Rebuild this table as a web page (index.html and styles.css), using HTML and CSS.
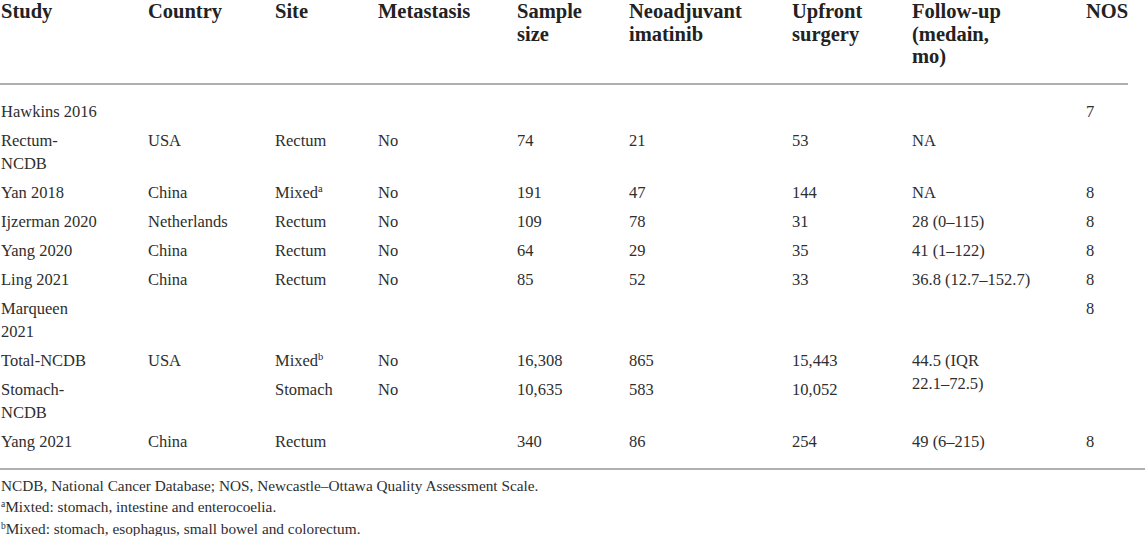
FILE: index.html
```html
<!DOCTYPE html>
<html lang="en">
<head>
<meta charset="utf-8">
<title>Studies</title>
<link rel="stylesheet" href="styles.css">
</head>
<body>
<table class="tbl">
  <colgroup>
    <col class="c1"><col class="c2"><col class="c3"><col class="c4"><col class="c5"><col class="c6"><col class="c7"><col class="c8"><col class="c9">
  </colgroup>
  <thead>
    <tr>
      <th>Study</th>
      <th>Country</th>
      <th>Site</th>
      <th>Metastasis</th>
      <th>Sample<br>size</th>
      <th>Neoadjuvant<br>imatinib</th>
      <th>Upfront<br>surgery</th>
      <th>Follow-up<br>(medain,<br>mo)</th>
      <th>NOS</th>
    </tr>
  </thead>
  <tbody>
    <tr class="first">
      <td>Hawkins 2016</td><td></td><td></td><td></td><td></td><td></td><td></td><td></td><td>7</td>
    </tr>
    <tr>
      <td>Rectum-<br>NCDB</td><td>USA</td><td>Rectum</td><td>No</td><td>74</td><td>21</td><td>53</td><td>NA</td><td></td>
    </tr>
    <tr>
      <td>Yan 2018</td><td>China</td><td>Mixed<sup>a</sup></td><td>No</td><td>191</td><td>47</td><td>144</td><td>NA</td><td>8</td>
    </tr>
    <tr>
      <td>Ijzerman 2020</td><td>Netherlands</td><td>Rectum</td><td>No</td><td>109</td><td>78</td><td>31</td><td>28 (0–115)</td><td>8</td>
    </tr>
    <tr>
      <td>Yang 2020</td><td>China</td><td>Rectum</td><td>No</td><td>64</td><td>29</td><td>35</td><td>41 (1–122)</td><td>8</td>
    </tr>
    <tr>
      <td>Ling 2021</td><td>China</td><td>Rectum</td><td>No</td><td>85</td><td>52</td><td>33</td><td>36.8 (12.7–152.7)</td><td>8</td>
    </tr>
    <tr>
      <td>Marqueen<br>2021</td><td></td><td></td><td></td><td></td><td></td><td></td><td></td><td>8</td>
    </tr>
    <tr>
      <td>Total-NCDB</td><td>USA</td><td>Mixed<sup>b</sup></td><td>No</td><td>16,308</td><td>865</td><td>15,443</td><td rowspan="2">44.5 (IQR<br>22.1–72.5)</td><td></td>
    </tr>
    <tr>
      <td>Stomach-<br>NCDB</td><td></td><td>Stomach</td><td>No</td><td>10,635</td><td>583</td><td>10,052</td><td></td>
    </tr>
    <tr class="last">
      <td>Yang 2021</td><td>China</td><td>Rectum</td><td></td><td>340</td><td>86</td><td>254</td><td>49 (6–215)</td><td>8</td>
    </tr>
  </tbody>
</table>
<div class="notes">
  <p>NCDB, National Cancer Database; NOS, Newcastle–Ottawa Quality Assessment Scale.</p>
  <p><sup>a</sup>Mixted: stomach, intestine and enterocoelia.</p>
  <p><sup>b</sup>Mixed: stomach, esophagus, small bowel and colorectum.</p>
</div>
</body>
</html>
```

FILE: styles.css
```css
html, body {
  margin: 0;
  padding: 0;
  background: #ffffff;
}

body {
  font-family: "Liberation Serif", "Times New Roman", serif;
  color: #2e2e2e;
}

.tbl {
  width: 1128px;
  border-collapse: collapse;
  table-layout: fixed;
}

.c1 { width: 147px; }
.c2 { width: 127px; }
.c3 { width: 103px; }
.c4 { width: 139px; }
.c5 { width: 112px; }
.c6 { width: 163px; }
.c7 { width: 120px; }
.c8 { width: 174px; }
.c9 { width: 43px; }

.tbl th {
  font-size: 20.5px;
  font-weight: bold;
  line-height: 22.6px;
  color: #222222;
  text-align: left;
  vertical-align: top;
  padding: 0 0 15px 1px;
  border-bottom: 2px solid #b0b0b0;
  white-space: nowrap;
}

.tbl td {
  font-size: 16.5px;
  line-height: 23px;
  text-align: left;
  vertical-align: top;
  padding: 3px 0 3px 1px;
  white-space: nowrap;
}

.tbl tr.first td {
  padding-top: 15px;
}

.tbl tr.last td {
  padding-bottom: 15px;
}

.tbl sup {
  font-size: 10.5px;
  line-height: 0;
  vertical-align: 6px;
}

.notes {
  border-top: 2px solid #b0b0b0;
  padding: 5px 0 0 1px;
}

.notes p {
  margin: 0;
  font-size: 15.3px;
  line-height: 21.5px;
  white-space: nowrap;
}

.notes sup {
  font-size: 9.5px;
  line-height: 0;
  vertical-align: 5px;
}
```
